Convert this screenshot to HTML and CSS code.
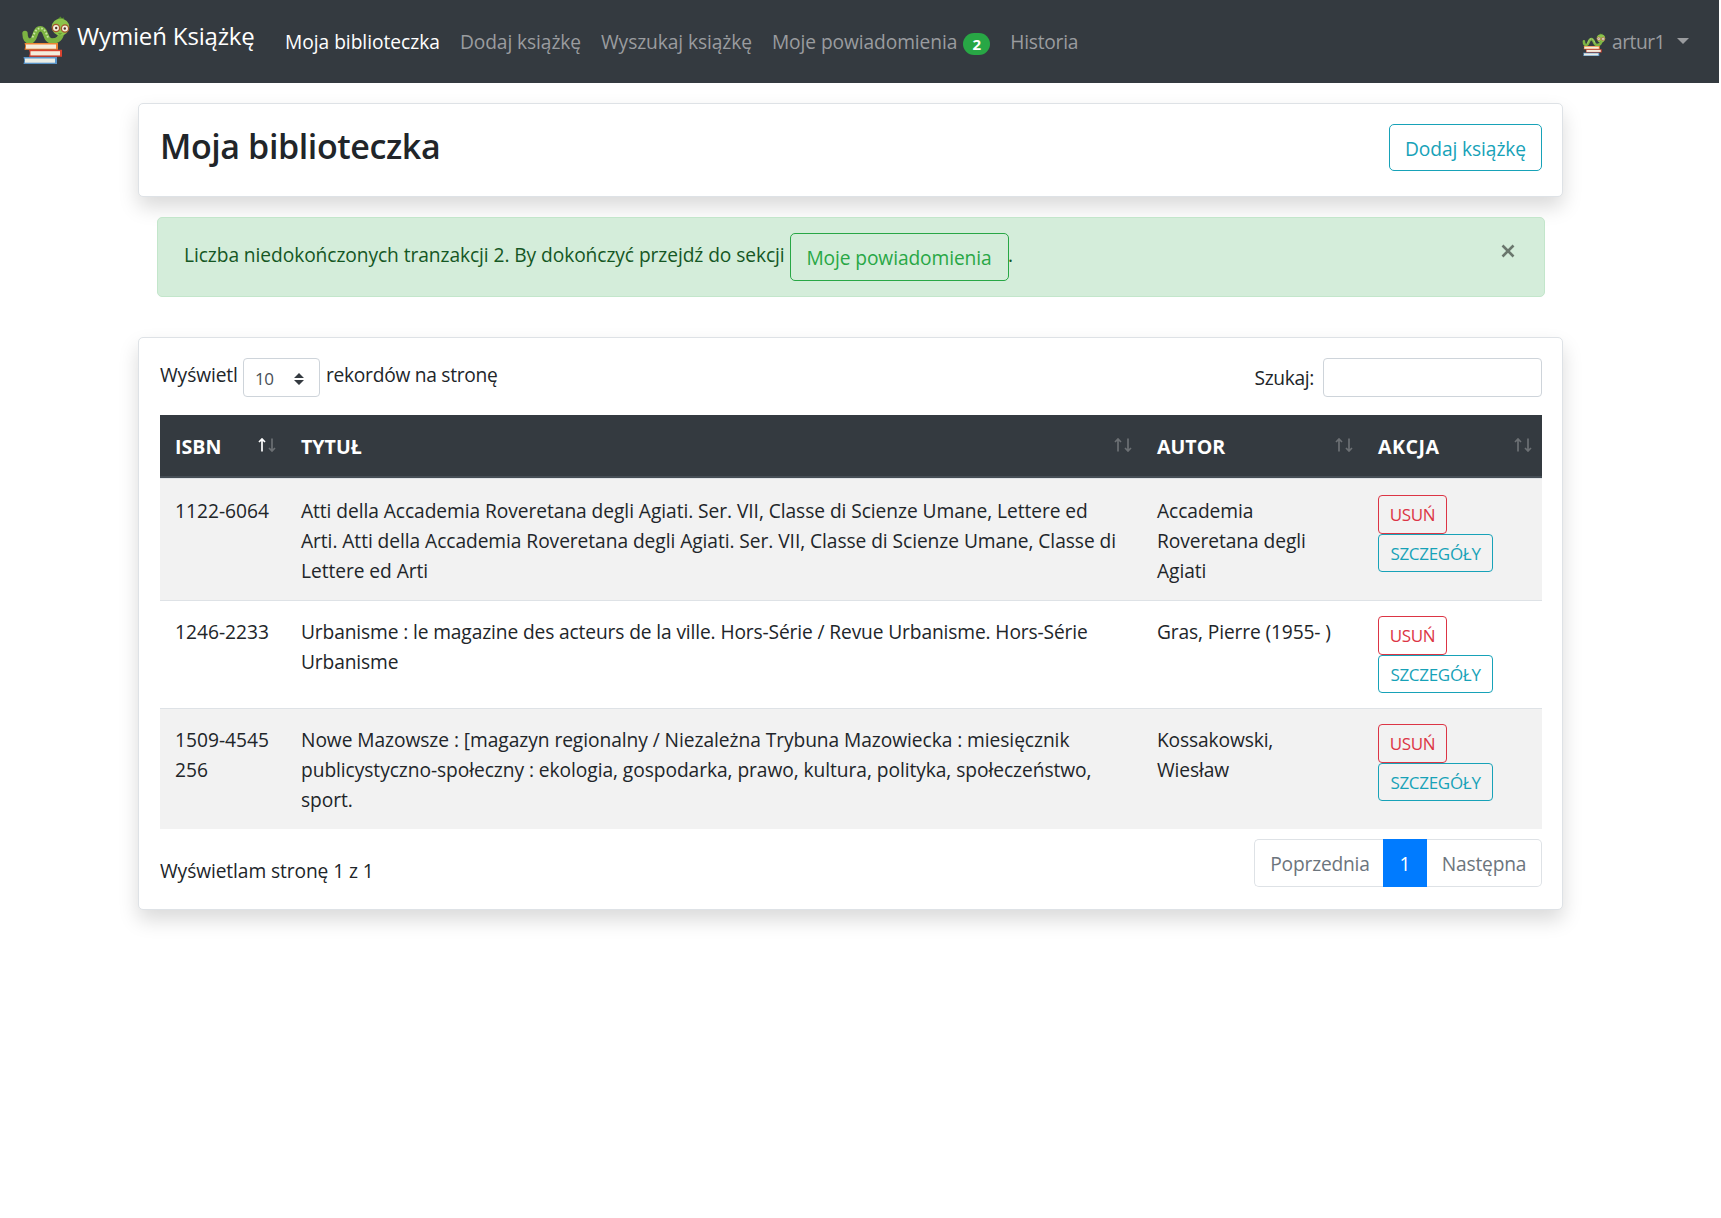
FILE: index.html
```html
<!DOCTYPE html>
<html lang="pl">
<head>
<meta charset="utf-8">
<title>Wymień Książkę</title>
<link rel="stylesheet" href="styles.css">
</head>
<body>
<svg class="defs" width="0" height="0" aria-hidden="true">
  <symbol id="worm" viewBox="0 0 48 50">
    <path d="M3 17.500C3 22.500 5 25.500 8.500 25C14 24 12 12.800 18.500 12.800C25 12.800 22.500 25 30 25C36 25 39 22 40 15" fill="none" stroke="#7cb342" stroke-width="5.400" stroke-linecap="round"/>
    <path d="M10.500 21.500C13 15 15 12.300 18.500 12.300C22 12.300 24 16 26 21.500" fill="none" stroke="#c9e3a4" stroke-width="1.900" stroke-dasharray="1.700 1.700"/>
    <path d="M36 3.500L38.500 1.500L39.500 3L42 2" fill="none" stroke="#558b2f" stroke-width="1.200"/>
    <ellipse cx="38.500" cy="11" rx="8.800" ry="8.600" fill="#8bc34a"/>
    <circle cx="34" cy="12" r="3.600" fill="#f5efdc" stroke="#a5562c" stroke-width="1.300"/>
    <circle cx="43" cy="12.500" r="3.600" fill="#f5efdc" stroke="#a5562c" stroke-width="1.300"/>
    <circle cx="34.200" cy="12" r="1.200" fill="#4e342e"/>
    <circle cx="42.800" cy="12.500" r="1.200" fill="#4e342e"/>
    <path d="M36.500 17.500Q38 18.600 39.500 17.500" fill="none" stroke="#558b2f"/>
    <path d="M2.500 27H36V33.700H2.500L3.300 30Z" fill="#ee8434"/>
    <rect x="4" y="28.500" width="30" height="4.200" fill="#f3ecdc"/>
    <path d="M7 33.700H40V40.700H7L7.800 37Z" fill="#d84330"/>
    <rect x="8.500" y="35.200" width="29.500" height="4.200" fill="#f3ecdc"/>
    <path d="M1.500 41H35V48H1.500L2.300 44.500Z" fill="#5b95c9"/>
    <rect x="3" y="42.500" width="30" height="4.200" fill="#eceee6"/>
  </symbol>
  <symbol id="sort-up" viewBox="0 0 8 14"><path d="M4 13.500V1.500M1 4L4 1L7 4" fill="none" stroke="currentColor" stroke-width="1.700"/></symbol>
  <symbol id="sort-down" viewBox="0 0 8 14"><path d="M4 .5V12.500M1 10L4 13L7 10" fill="none" stroke="currentColor" stroke-width="1.700"/></symbol>
</svg>

<nav class="navbar">
  <a class="brand"><svg class="brand-logo"><use href="#worm"/></svg><span class="brand-name">Wymień Książkę</span></a>
  <div class="nav-links">
    <a class="nav-link active">Moja biblioteczka</a>
    <a class="nav-link">Dodaj książkę</a>
    <a class="nav-link">Wyszukaj książkę</a>
    <a class="nav-link"><span>Moje powiadomienia</span><span class="badge">2</span></a>
    <a class="nav-link">Historia</a>
  </div>
  <a class="user"><svg class="user-logo"><use href="#worm"/></svg><span class="user-name">artur1</span><i class="caret"></i></a>
</nav>

<main class="container">
  <section class="card heading">
    <h2 class="title">Moja biblioteczka</h2>
    <a class="btn btn-info">Dodaj książkę</a>
  </section>

  <div class="alert">
    <span class="alert-text">Liczba niedokończonych tranzakcji 2. By dokończyć przejdź do sekcji</span>
    <a class="btn btn-success">Moje powiadomienia</a><span class="dot">.</span>
    <svg class="close" viewBox="0 0 14 14"><path d="M1.500 1.500L12.500 12.500M12.500 1.500L1.500 12.500"/></svg>
  </div>

  <section class="card books">
    <div class="controls">
      <label class="length"><span class="length-text">Wyświetl</span>
        <span class="select"><span>10</span><svg class="select-icon" viewBox="0 0 10 12"><path d="M5 0L10 5H0ZM5 12L10 7H0Z"/></svg></span>
        <span class="length-text after">rekordów na stronę</span></label>
      <label class="search"><span>Szukaj:</span><input class="search-input" type="text"></label>
    </div>

    <table class="table">
      <colgroup><col class="c-isbn"><col class="c-title"><col class="c-author"><col class="c-action"></colgroup>
      <thead>
        <tr>
          <th><div class="th"><span>ISBN</span><span class="sort asc"><svg><use href="#sort-up"/></svg><svg><use href="#sort-down"/></svg></span></div></th>
          <th><div class="th"><span>TYTUŁ</span><span class="sort"><svg><use href="#sort-up"/></svg><svg><use href="#sort-down"/></svg></span></div></th>
          <th><div class="th"><span>AUTOR</span><span class="sort"><svg><use href="#sort-up"/></svg><svg><use href="#sort-down"/></svg></span></div></th>
          <th><div class="th"><span class="wide">AKCJA</span><span class="sort"><svg><use href="#sort-up"/></svg><svg><use href="#sort-down"/></svg></span></div></th>
        </tr>
      </thead>
      <tbody>
        <tr class="odd">
          <td class="isbn">1122-6064</td>
          <td>Atti della Accademia Roveretana degli Agiati. Ser. VII, Classe di Scienze Umane, Lettere ed<br>Arti. Atti della Accademia Roveretana degli Agiati. Ser. VII, Classe di Scienze Umane, Classe di<br>Lettere ed Arti</td>
          <td>Accademia<br>Roveretana degli<br>Agiati</td>
          <td><div class="actions"><a class="btn-sm danger">USUŃ</a><a class="btn-sm info">SZCZEGÓŁY</a></div></td>
        </tr>
        <tr class="even">
          <td class="isbn">1246-2233</td>
          <td class="tight">Urbanisme : le magazine des acteurs de la ville. Hors-Série / Revue Urbanisme. Hors-Série<br>Urbanisme</td>
          <td class="tight">Gras, Pierre (1955- )</td>
          <td><div class="actions"><a class="btn-sm danger">USUŃ</a><a class="btn-sm info">SZCZEGÓŁY</a></div></td>
        </tr>
        <tr class="odd">
          <td class="isbn">1509-4545<br>256</td>
          <td>Nowe Mazowsze : [magazyn regionalny / Niezależna Trybuna Mazowiecka : miesięcznik<br>publicystyczno-społeczny : ekologia, gospodarka, prawo, kultura, polityka, społeczeństwo,<br>sport.</td>
          <td class="tight">Kossakowski,<br>Wiesław</td>
          <td><div class="actions"><a class="btn-sm danger">USUŃ</a><a class="btn-sm info">SZCZEGÓŁY</a></div></td>
        </tr>
      </tbody>
    </table>

    <div class="footer">
      <span class="info-text">Wyświetlam stronę 1 z 1</span>
      <div class="pagination"><a class="page prev">Poprzednia</a><a class="page current">1</a><a class="page next">Następna</a></div>
    </div>
  </section>
</main>
</body>
</html>
```
FILE: styles.css
```css
* { box-sizing: border-box; }
body {
  min-height: 1218px;
  margin: 0;
  background: #fff;
  color: #212529;
  font-family: "Open Sans", sans-serif;
  font-size: 19.2px;
  line-height: 30px;
}
.defs { display: block; }

.navbar {
  display: flex;
  align-items: center;
  width: 1719px;
  height: 83px;
  padding: 0 30px 0 22px;
  background: #343a40;
  color: #9a9c9f;
  white-space: nowrap;
}
.brand {
  display: flex;
  width: 263px;
  padding-bottom: 1px;
  color: #fff;
  font-size: 24px;
  letter-spacing: -.15px;
}
.brand-logo { width: 48px; height: 50px; }
.brand-name { margin: 5px 0 0 7px; }
.nav-links { display: flex; gap: 20px; flex: 1; letter-spacing: -.09px; }
.nav-link { display: flex; align-items: center; }
.nav-link.active { color: #fff; letter-spacing: -.03px; }
.nav-link:last-child { letter-spacing: -.25px; }
.badge {
  width: 27px;
  height: 22px;
  margin: 4px 0 0 6px;
  border-radius: 11px;
  background: #28a745;
  color: #fff;
  font-size: 15px;
  font-weight: 700;
  line-height: 22px;
  text-align: center;
}
.user { display: flex; align-items: center; }
.user-logo { width: 24px; height: 24px; margin: 7px 6px 0 0; }
.user-name { letter-spacing: -.5px; }
.caret {
  margin: 0 0 2px 12px;
  border: 6px solid transparent;
  border-top-color: #9a9c9f;
  border-bottom: 0;
}

.container { width: 1425px; margin: 20px 0 0 138px; }
.card {
  border: 1px solid #dee2e6;
  border-radius: 5px;
  background: #fff;
  box-shadow: 0 10px 20px rgba(0, 0, 0, .15);
}
.heading {
  display: flex;
  justify-content: space-between;
  align-items: flex-start;
  height: 94px;
  padding: 20px 20px 0 21px;
}
.title { margin: 1px 0 0; font-size: 34px; font-weight: 600; line-height: 42px; letter-spacing: -.4px; }
.btn {
  display: block;
  height: 48px;
  padding: 9px 16px 0 15px;
  border: 1px solid;
  border-radius: 5px;
  letter-spacing: -.1px;
  text-align: center;
  white-space: nowrap;
}
.btn-info { width: 153px; color: #17a2b8; height: 47px; }
.btn-success { width: 219px; color: #28a745; }

.alert {
  display: flex;
  align-items: flex-start;
  height: 80px;
  margin: 20px 18px 40px 19px;
  padding: 15px 29px 0 26px;
  border: 1px solid #c3e6cb;
  border-radius: 5px;
  background: #d4edda;
  color: #155724;
}
.alert-text { width: 606px; margin-top: 7px; letter-spacing: -.08px; white-space: nowrap; }
.dot { margin: 7px 0 0 -1px; }
.close { width: 14px; height: 14px; margin: 11px 0 0 auto; }
.close path { stroke: #6a776d; stroke-width: 2.6; }

.books { height: 573px; padding: 20px 20px 0 21px; }
.controls { display: flex; justify-content: space-between; height: 57px; white-space: nowrap; }
.length, .search { display: flex; }
.length-text { width: 83px; margin-top: 2px; letter-spacing: -.1px; }
.length-text.after { margin-left: 6px; letter-spacing: -.28px; }
.select {
  display: flex;
  align-items: center;
  justify-content: space-between;
  width: 77px;
  height: 39px;
  padding: 3px 15px 0 11px;
  border: 1px solid #ced4da;
  border-radius: 4px;
  color: #495057;
  font-size: 17px;
  letter-spacing: -.5px;
}
.select-icon { width: 10px; height: 12px; fill: #343a40; }
.search { gap: 9px; }
.search > span { margin-top: 5px; letter-spacing: -.35px; }
.search-input { width: 219px; height: 39px; border: 1px solid #ced4da; border-radius: 4px; }

.table {
  width: 1382px;
  table-layout: fixed;
  border-collapse: separate;
  border-spacing: 0;
  white-space: nowrap;
}
.c-isbn { width: 126px; }
.c-title { width: 856px; }
.c-author { width: 221px; }
.c-action { width: 179px; }
th {
  height: 63px;
  padding: 3px 10px 0 15px;
  border-bottom: 2px solid #454d55;
  background: #343a40;
  color: #fff;
  font-size: 19.6px;
  text-align: left;
}
.th { display: flex; justify-content: space-between; align-items: center; }
.wide { letter-spacing: .5px; }
.sort { display: flex; gap: 2px; margin-bottom: 5px; color: #6c7074; }
.sort svg { width: 8px; height: 14px; }
.sort.asc svg:first-child { color: #fff; }
td {
  padding: 16px 15px 0;
  border-top: 1px solid #dee2e6;
  letter-spacing: -.065px;
  vertical-align: top;
}
td.isbn { letter-spacing: 0; }
td.tight { letter-spacing: -.13px; }
.odd { height: 122px; background: #f2f2f2; }
.odd:first-child td { padding-top: 17px; }
.even { height: 108px; }
.odd:last-child { height: 121px; }
.actions { display: flex; flex-direction: column; align-items: flex-start; margin-top: -1px; }
.btn-sm {
  height: 38.5px;
  padding: 5px 0 0;
  border: 1px solid;
  border-radius: 4px;
  font-size: 17px;
  font-weight: 400;
  line-height: 28px;
  letter-spacing: -.3px;
  text-align: center;
}
.danger { width: 69px; color: #dc3545; }
.info { width: 115px; color: #17a2b8; }

.footer { display: flex; justify-content: space-between; padding-top: 10px; }
.info-text { margin-top: 17px; letter-spacing: -.1px; }
.pagination { display: flex; letter-spacing: -.2px; }
.page { height: 48px; padding-top: 9px; border: 1px solid #dee2e6; color: #6c757d; text-align: center; }
.prev { width: 129px; padding-left: 2px; border-radius: 5px 0 0 5px; border-right: 0; }
.current { width: 44px; border-color: #007bff; background: #007bff; color: #fff; }
.next { width: 115px; border-radius: 0 5px 5px 0; border-left: 0; }
```
